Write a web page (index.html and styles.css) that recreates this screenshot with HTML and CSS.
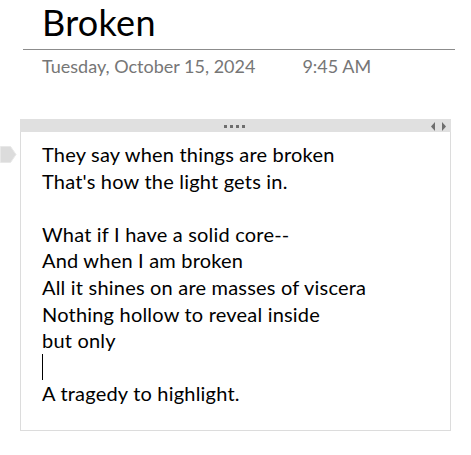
FILE: index.html
```html
<!DOCTYPE html>
<html lang="en">
<head>
    <meta charset="UTF-8">
    <meta name="viewport" content="width=device-width, initial-scale=1.0">
    <title>Broken</title>
    <link rel="stylesheet" href="styles.css">
</head>
<body>
    <header class="page-head">
        <h1 class="page-title">Broken</h1>
        <hr class="title-rule">
        <div class="stamp">
            <span>Tuesday, October 15, 2024</span>
            <span>9:45 AM</span>
        </div>
    </header>

    <section class="note">
        <svg class="note-tab" width="17" height="19" viewBox="0 0 17 19">
            <polygon points="0.5,1.5 10.5,1.5 16,9.5 10.5,17.5 0.5,17.5" fill="#dcdcdc" stroke="#e8e8e8"/>
        </svg>
        <div class="note-bar">
            <div class="grip">
                <span></span><span></span><span></span><span></span>
            </div>
            <svg class="resize" width="16" height="9" viewBox="0 0 16 9">
                <polygon points="4,0 4,9 0,4.5" fill="#6e6e6e"/>
                <polygon points="11,0 11,9 15,4.5" fill="#6e6e6e"/>
            </svg>
        </div>
        <div class="note-body">
            <p>They say when things are broken</p>
            <p>That's how the light gets in.</p>
            <p>&nbsp;</p>
            <p>What if I have a solid core--</p>
            <p>And when I am broken</p>
            <p>All it shines on are masses of viscera</p>
            <p>Nothing hollow to reveal inside</p>
            <p>but only</p>
            <p><span class="caret"></span></p>
            <p>A tragedy to highlight.</p>
        </div>
    </section>
</body>
</html>
```

FILE: styles.css
```css
body {
    margin: 0;
    font-family: Lato, "Open Sans", sans-serif;
    color: #000000;
    background-color: #ffffff;
}

.page-head {
    display: flex;
    flex-direction: column;
}

.page-title {
    margin: 0;
    padding-left: 42px;
    font-size: 36px;
    font-weight: normal;
    line-height: normal;
    letter-spacing: 0.3px;
}

.title-rule {
    margin: 5px 0 0 23px;
    width: 432px;
    height: 1px;
    border: none;
    background-color: #8c8c8c;
}

.stamp {
    display: flex;
    gap: 47px;
    margin-top: 6px;
    padding-left: 42px;
    font-size: 18px;
    line-height: 20px;
    color: #767676;
}

.note {
    position: relative;
    width: 431px;
    margin: 43px 0 0 20px;
}

.note-tab {
    position: absolute;
    left: -20px;
    top: 26px;
}

.note-bar {
    position: relative;
    display: flex;
    justify-content: center;
    align-items: center;
    height: 13px;
    background-color: #e0e0e0;
}

.grip {
    display: flex;
    gap: 3px;
    margin: 1px 2px 0 0;
}

.grip span {
    width: 3px;
    height: 3px;
    background-color: #6e6e6e;
}

.resize {
    position: absolute;
    right: 4px;
    top: 3px;
}

.note-body {
    width: 408px;
    padding: 9px 0 23px 21px;
    border: 1px solid #dcdcdc;
    border-top: none;
    font-size: 20px;
    letter-spacing: 0.2px;
    line-height: 26.6px;
}

.note-body p {
    margin: 0;
}

.caret {
    display: inline-block;
    width: 1px;
    height: 26px;
    background-color: #000000;
    vertical-align: top;
}
```
